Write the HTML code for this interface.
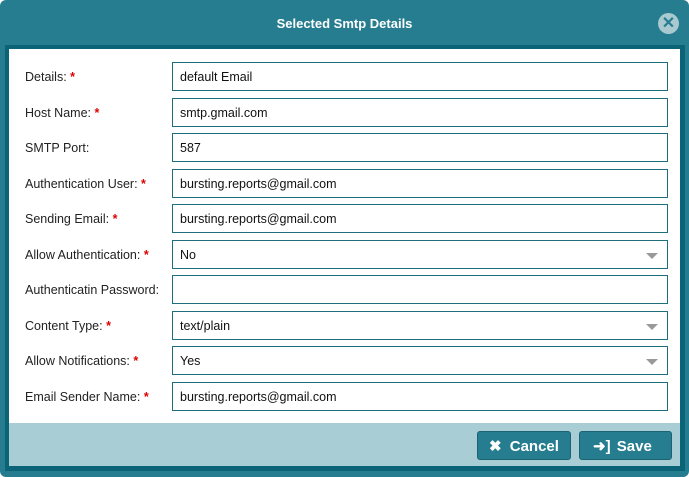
<!DOCTYPE html>
<html><head><style>
*{box-sizing:border-box;margin:0;padding:0}
body{width:689px;height:477px;background:#fff;font-family:"Liberation Sans",sans-serif;position:relative;overflow:hidden}
.dlg{position:absolute;left:0;top:0;width:689px;height:477px;background:#267d8f;border-radius:6px}
.title{position:absolute;top:16px;left:0;width:100%;text-align:center;color:#fff;font-weight:bold;font-size:13px}
.close{position:absolute;left:658px;top:13px;width:21px;height:21px;border-radius:50%;background:#a8c9d0;color:#267d8f;font-weight:bold;font-size:16px;line-height:21px;text-align:center}
.panel{position:absolute;left:5px;top:45px;width:680px;height:426px;background:#0b6378}
.body{position:absolute;left:4px;top:4px;width:671px;height:374px;background:#fff}
.foot{position:absolute;left:4px;top:378px;width:671px;height:43px;background:#a9cdd4}
.row{position:absolute;left:0;height:29px;width:671px}
.row label{position:absolute;left:16px;top:8px;font-size:12.5px;color:#222}
.row label b{color:#d00;font-weight:bold}
.inp{position:absolute;left:163px;top:0;width:496px;height:29px;border:1px solid #1f6e7e;font-size:12.5px;padding:7px 7px 5px;color:#111}
.arr{position:absolute;right:9px;top:12px;border-left:6px solid transparent;border-right:6px solid transparent;border-top:6px solid #999}
.btn{position:absolute;top:8px;height:29px;background:#267d8f;border:1px solid #1b6373;border-radius:3px;color:#fff;font-weight:bold;font-size:15px;line-height:29px}
</style></head><body>
<div class="dlg">
<div class="title">Selected Smtp Details</div>
<div class="close">✕</div>
<div class="panel">
<div class="body">
<div class="row" style="top:13px"><label>Details: <b>*</b></label><div class="inp">default Email</div></div>
<div class="row" style="top:49px"><label>Host Name: <b>*</b></label><div class="inp">smtp.gmail.com</div></div>
<div class="row" style="top:84px"><label>SMTP Port:</label><div class="inp">587</div></div>
<div class="row" style="top:120px"><label>Authentication User: <b>*</b></label><div class="inp">bursting.reports@gmail.com</div></div>
<div class="row" style="top:155px"><label>Sending Email: <b>*</b></label><div class="inp">bursting.reports@gmail.com</div></div>
<div class="row" style="top:191px"><label>Allow Authentication: <b>*</b></label><div class="inp">No<span class="arr"></span></div></div>
<div class="row" style="top:226px"><label>Authenticatin Password:</label><div class="inp"></div></div>
<div class="row" style="top:262px"><label>Content Type: <b>*</b></label><div class="inp">text/plain<span class="arr"></span></div></div>
<div class="row" style="top:297px"><label>Allow Notifications: <b>*</b></label><div class="inp">Yes<span class="arr"></span></div></div>
<div class="row" style="top:333px"><label>Email Sender Name: <b>*</b></label><div class="inp">bursting.reports@gmail.com</div></div>
</div>
<div class="foot">
<div class="btn" style="left:468px;width:94px"><span style="margin-left:11px">✖</span> <span style="margin-left:4px">Cancel</span></div>
<div class="btn" style="left:570px;width:93px"><span style="margin-left:13px">➜]</span> <span style="margin-left:2px">Save</span></div>
</div>
</div>
</div>
</body></html>
